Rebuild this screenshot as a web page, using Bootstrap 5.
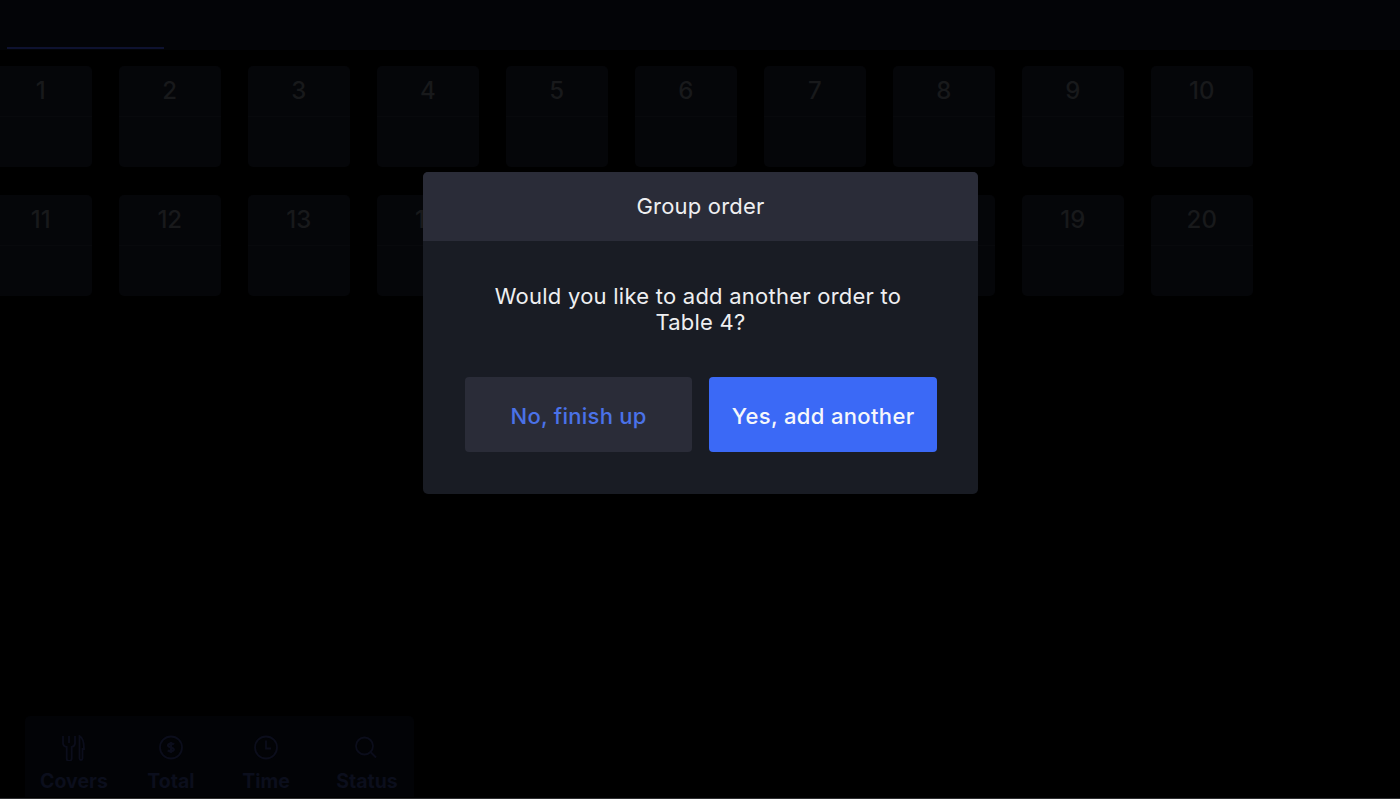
<!DOCTYPE html>
<html lang="en">
<head>
<meta charset="utf-8">
<title>Group order</title>
<link href="https://cdn.jsdelivr.net/npm/bootstrap@5.3.0/dist/css/bootstrap.min.css" rel="stylesheet">
<style>
html, body { height: 100%; }
body { background: #000; font-family: Inter, "Liberation Sans", sans-serif; overflow: hidden; height: 799px; border-bottom: 1px solid #2e2f31; }
.top-strip { height: 50px; background: #030407; }
.tab-line { width: 157px; height: 2px; background: #0e1230; margin-left: 7px; }
.tab-holder { padding-top: 47px; }
.tile-grid { display: grid; grid-template-columns: repeat(10, 101.5px); column-gap: 27.5px; row-gap: 28px; margin: 16px 0 0 -10px; }
.tile { height: 101px; background: #050609; border-radius: 5px; overflow: hidden; color: #18191b; font-size: 24px; font-weight: 500; text-align: center; }
.tile-head { height: 51px; line-height: 50px; border-bottom: 1px solid #08090c; }
.legend-panel { position: absolute; left: 25px; top: 716px; width: 389px; height: 81px; background: #020306; border-radius: 5px 5px 0 0; color: #0b0e1c; font-weight: 700; font-size: 19.5px; padding-top: 19px; display: grid; grid-template-columns: 98px 96px 94px 101px; }
.legend-item svg { width: 26px; height: 26px; fill: none; stroke: #0b0d1b; stroke-width: 1.8; }
.legend-item span { line-height: 24px; margin-top: 8px; white-space: nowrap; }
.legend-shift { padding-left: 7px; }
.dialog-wrap { position: absolute; inset: 0; padding-top: 172px; }
.dialog-box { width: 555px; height: 321.500px; background: #191c24; border-radius: 5px; overflow: hidden; color: #eeeff1; font-size: 22px; margin-left: 423px; }
.dialog-title { height: 69px; background: #2a2c38; line-height: 69px; letter-spacing: .2px; }
.dialog-copy { padding: 42px 60px 0; line-height: 26px; height: 136px; letter-spacing: .24px; }
.copy-first { padding-right: 5px; }
.dialog-actions { padding: 0 41px 0 42px; gap: 17px; }
.dialog-btn { height: 75px; font-size: 22px; font-weight: 500; border: 0; border-radius: 4px; padding: 3px 0 0; }
.dialog-btn.btn-no, .dialog-btn.btn-no:hover { width: 227.500px; background: #2a2c38; color: #4a72e8; letter-spacing: .25px; }
.dialog-btn.btn-yes, .dialog-btn.btn-yes:hover { width: 228px; background: #3b69f6; color: #f6f7fb; letter-spacing: .35px; }
</style>
</head>
<body class="position-relative">
<div class="top-strip tab-holder"><div class="tab-line"></div></div>
<div class="tile-grid">
  <div class="tile"><div class="tile-head">1</div></div>
  <div class="tile"><div class="tile-head">2</div></div>
  <div class="tile"><div class="tile-head">3</div></div>
  <div class="tile"><div class="tile-head">4</div></div>
  <div class="tile"><div class="tile-head">5</div></div>
  <div class="tile"><div class="tile-head">6</div></div>
  <div class="tile"><div class="tile-head">7</div></div>
  <div class="tile"><div class="tile-head">8</div></div>
  <div class="tile"><div class="tile-head">9</div></div>
  <div class="tile"><div class="tile-head">10</div></div>
  <div class="tile"><div class="tile-head">11</div></div>
  <div class="tile"><div class="tile-head">12</div></div>
  <div class="tile"><div class="tile-head">13</div></div>
  <div class="tile"><div class="tile-head">14</div></div>
  <div class="tile"><div class="tile-head"></div></div>
  <div class="tile"><div class="tile-head"></div></div>
  <div class="tile"><div class="tile-head"></div></div>
  <div class="tile"><div class="tile-head"></div></div>
  <div class="tile"><div class="tile-head">19</div></div>
  <div class="tile"><div class="tile-head">20</div></div>
</div>
<div class="legend-panel">
  <div class="legend-item d-flex flex-column align-items-center">
    <svg viewBox="0 0 26 26"><path d="M2 1v7c0 2.500 1.500 3.500 3.700 4V23.500a2.500 2.500 0 0 0 5 0V12c2.200-.5 3.300-1.500 3.300-4V1M8 1v7M18.500 1c3 1.500 4.500 6 4.500 13h-1.500v9.500a1.500 1.500 0 0 1-3 0z"/></svg>
    <span>Covers</span>
  </div>
  <div class="legend-item d-flex flex-column align-items-center">
    <svg viewBox="0 0 26 26"><circle cx="13" cy="12.500" r="11"/><path stroke-width="2.200" d="M16 9.500c-1-1.200-5.500-1.500-6 .7-.4 2.500 6 1.800 5.800 4.500-.3 2-4.300 2-6 .6M13 7v11"/></svg>
    <span>Total</span>
  </div>
  <div class="legend-item d-flex flex-column align-items-center">
    <svg viewBox="0 0 26 26"><circle cx="13" cy="12.500" r="11"/><path d="M13 5.500v8h5"/></svg>
    <span>Time</span>
  </div>
  <div class="legend-item legend-shift d-flex flex-column align-items-center">
    <svg viewBox="0 0 26 26"><circle cx="10.500" cy="11" r="8.500"/><path d="M16.500 17l5.500 5.500"/></svg>
    <span>Status</span>
  </div>
</div>
<div class="dialog-wrap">
  <div class="dialog-box text-center">
    <div class="dialog-title">Group order</div>
    <div class="dialog-copy"><span class="d-block copy-first">Would you like to add another order to</span>Table 4?</div>
    <div class="dialog-actions d-flex">
      <button type="button" class="btn dialog-btn btn-no">No, finish up</button>
      <button type="button" class="btn dialog-btn btn-yes">Yes, add another</button>
    </div>
  </div>
</div>
<script src="https://cdn.jsdelivr.net/npm/bootstrap@5.3.0/dist/js/bootstrap.bundle.min.js"></script>
</body>
</html>
